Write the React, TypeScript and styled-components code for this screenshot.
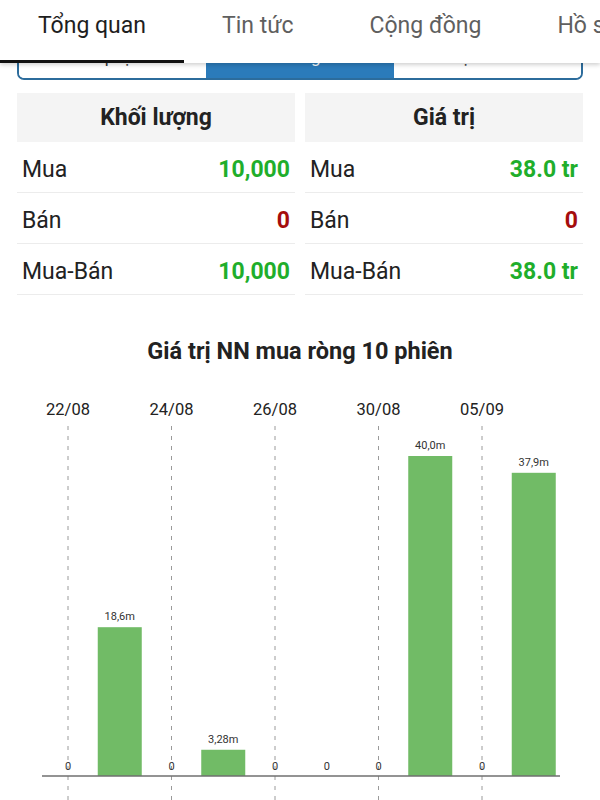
import styled, { createGlobalStyle } from "styled-components";

const GlobalStyle = createGlobalStyle`
  body {
    margin: 0;
    background: #fff;
    font-family: Roboto, "Noto Sans", Arial, sans-serif;
    overflow: hidden;
  }
`;

const TABS = ["Tổng quan", "Tin tức", "Cộng đồng", "Hồ sơ", "Tài chính"];
const SEGMENTS = ["Khớp lệnh", "Nước ngoài", "Tự doanh"];

const TABLES = [
  {
    title: "Khối lượng",
    rows: [
      { label: "Mua", value: "10,000", tone: "up" as const },
      { label: "Bán", value: "0", tone: "down" as const },
      { label: "Mua-Bán", value: "10,000", tone: "up" as const },
    ],
  },
  {
    title: "Giá trị",
    rows: [
      { label: "Mua", value: "38.0 tr", tone: "up" as const },
      { label: "Bán", value: "0", tone: "down" as const },
      { label: "Mua-Bán", value: "38.0 tr", tone: "up" as const },
    ],
  },
];

/** Net foreign buy value per session, in millions. */
const SESSIONS = [
  { date: "22/08", value: 0 },
  { date: "23/08", value: 18.6, label: "18,6m" },
  { date: "24/08", value: 0 },
  { date: "25/08", value: 3.28, label: "3,28m" },
  { date: "26/08", value: 0 },
  { date: "29/08", value: 0 },
  { date: "30/08", value: 0 },
  { date: "31/08", value: 40.0, label: "40,0m" },
  { date: "05/09", value: 0 },
  { date: "06/09", value: 37.9, label: "37,9m" },
];

const TabBar = styled.nav`
  position: sticky;
  top: 0;
  z-index: 2;
  display: flex;
  height: 63px;
  background: #fff;
  box-shadow: 0 2px 4px rgba(0, 0, 0, 0.18);
  overflow: hidden;
  white-space: nowrap;
`;

const Tab = styled.div<{ $active?: boolean }>`
  flex: none;
  box-sizing: border-box;
  height: 63px;
  padding: 12px 38px 0;
  font-size: 23px;
  color: ${(p) => (p.$active ? "#1e1e1e" : "#5f5f5f")};
  border-bottom: 3px solid ${(p) => (p.$active ? "#111" : "transparent")};
`;

const Content = styled.main`
  padding: 0 17px;
`;

const Segmented = styled.div`
  display: flex;
  margin-top: -27px;
  height: 44px;
  box-sizing: border-box;
  border: 2px solid #2c6c9c;
  border-radius: 7px;
  overflow: hidden;
`;

const Segment = styled.div<{ $active?: boolean }>`
  flex: 1;
  display: flex;
  align-items: center;
  justify-content: center;
  padding-bottom: 2px;
  font-size: 17px;
  line-height: 1;
  color: ${(p) => (p.$active ? "#fff" : "#333")};
  background: ${(p) => (p.$active ? "#2b7bba" : "#fff")};
`;

const Tables = styled.div`
  display: grid;
  grid-template-columns: 1fr 1fr;
  gap: 10px;
  margin-top: 13px;
`;

const TableHead = styled.div`
  height: 49px;
  display: flex;
  align-items: center;
  justify-content: center;
  background: #f4f4f4;
  font-size: 23px;
  font-weight: 700;
  color: #222;
`;

const Row = styled.div`
  height: 51px;
  box-sizing: border-box;
  display: flex;
  align-items: center;
  justify-content: space-between;
  padding: 5px 5px 0;
  border-bottom: 1px solid #ececec;
  font-size: 23px;
  color: #222;
`;

const Value = styled.span<{ $tone: "up" | "down" }>`
  font-weight: 700;
  color: ${(p) => (p.$tone === "up" ? "#1fae2b" : "#a50d0d")};
`;

const ChartTitle = styled.h2`
  margin: 42px 0 0;
  height: 43px;
  text-align: center;
  font-size: 23.5px;
  font-weight: 700;
  color: #222;
`;

const ChartSvg = styled.svg`
  display: block;
  width: 600px;
  height: 420px;
  font-family: Roboto, Arial, sans-serif;
`;

function NetBuyChart() {
  const slot = 51.75;
  const x0 = 68;
  const base = 396; // baseline y inside the svg
  const scale = 8; // px per million

  return (
    <ChartSvg viewBox="0 0 600 420">
      {SESSIONS.map((s, i) =>
        i % 2 === 0 ? (
          <g key={s.date}>
            <text x={x0 + i * slot} y={35} textAnchor="middle" fontSize="16.5" fill="#222">
              {s.date}
            </text>
            <line
              x1={x0 + i * slot}
              x2={x0 + i * slot}
              y1={46}
              y2={420}
              stroke="#9a9a9a"
              strokeWidth="1"
              strokeDasharray="4 6"
            />
          </g>
        ) : null
      )}
      {SESSIONS.map((s, i) => {
        const cx = x0 + i * slot;
        if (s.value === 0) {
          return (
            <text key={s.date} x={cx} y={390} textAnchor="middle" fontSize="11" fill="#333">
              0
            </text>
          );
        }
        const h = s.value * scale;
        return (
          <g key={s.date}>
            <rect x={cx - 22} y={base - h} width={44} height={h} fill="#71bb66" />
            <text x={cx} y={base - h - 7} textAnchor="middle" fontSize="11" fill="#333">
              {s.label}
            </text>
          </g>
        );
      })}
      <line x1={42} x2={560} y1={base} y2={base} stroke="#6f6f6f" strokeWidth="1.5" />
    </ChartSvg>
  );
}

export default function App() {
  return (
    <>
      <GlobalStyle />
      <TabBar>
        {TABS.map((t, i) => (
          <Tab key={t} $active={i === 0}>
            {t}
          </Tab>
        ))}
      </TabBar>
      <Content>
        <Segmented>
          {SEGMENTS.map((s, i) => (
            <Segment key={s} $active={i === 1}>
              {s}
            </Segment>
          ))}
        </Segmented>
        <Tables>
          {TABLES.map((t) => (
            <div key={t.title}>
              <TableHead>{t.title}</TableHead>
              {t.rows.map((r) => (
                <Row key={r.label}>
                  <span>{r.label}</span>
                  <Value $tone={r.tone}>{r.value}</Value>
                </Row>
              ))}
            </div>
          ))}
        </Tables>
        <ChartTitle>Giá trị NN mua ròng 10 phiên</ChartTitle>
      </Content>
      <NetBuyChart />
    </>
  );
}
